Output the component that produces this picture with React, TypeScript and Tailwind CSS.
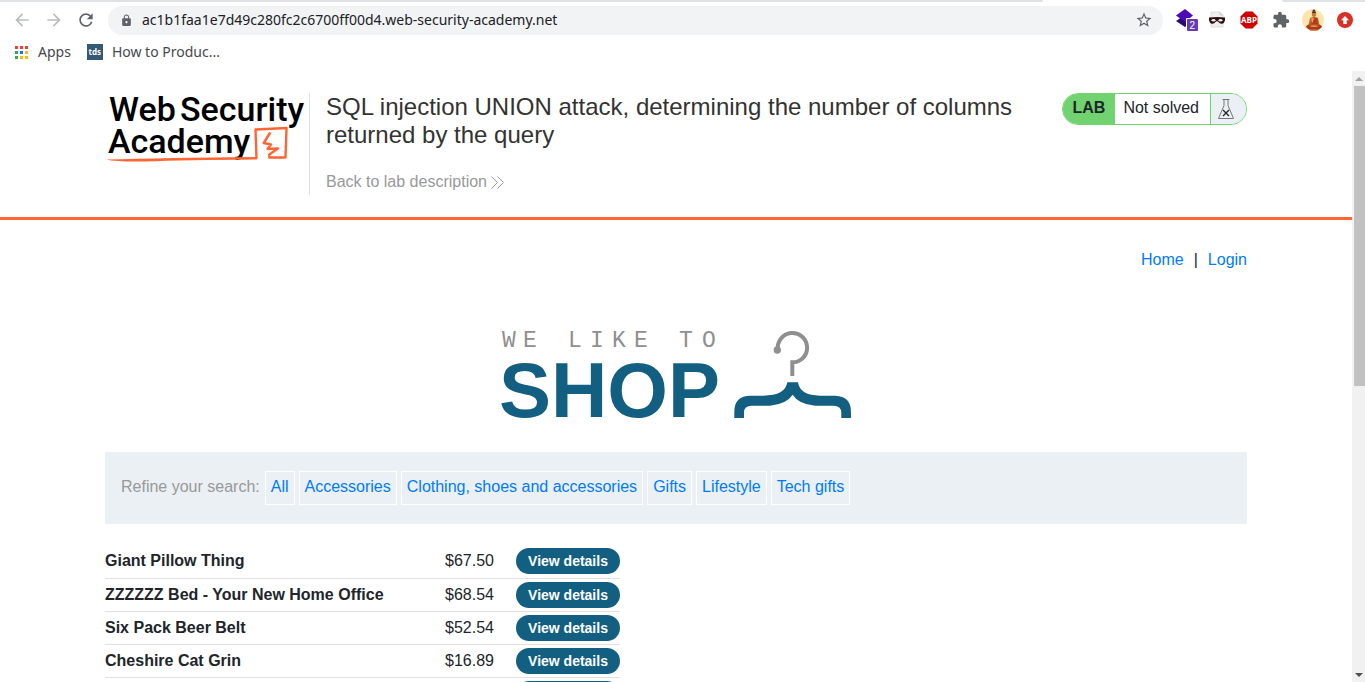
import React from "react";
import {
    MdArrowBack,
    MdArrowForward,
    MdExtension,
    MdLock,
    MdRefresh,
    MdStarBorder,
} from "react-icons/md";

const categories = [
    "All",
    "Accessories",
    "Clothing, shoes and accessories",
    "Gifts",
    "Lifestyle",
    "Tech gifts",
];

const products = [
    {name: "Giant Pillow Thing", price: "$67.50"},
    {name: "ZZZZZZ Bed - Your New Home Office", price: "$68.54"},
    {name: "Six Pack Beer Belt", price: "$52.54"},
    {name: "Cheshire Cat Grin", price: "$16.89"},
    {name: "", price: ""},
];

// 3x3 grid of the "Apps" bookmark
const appDots = [
    "bg-[#ea4335]", "bg-[#ea4335]", "bg-[#ea4335]",
    "bg-[#34a853]", "bg-[#1a73e8]", "bg-[#fbbc04]",
    "bg-[#34a853]", "bg-[#fbbc04]", "bg-[#fbbc04]",
];

const LayersIcon = () => (
    <svg width="22" height="22" viewBox="0 0 22 22">
        <path d="M0 12 9 6l8 6-8 6z" fill="#2a0a6e"/>
        <path d="M0 6.500 9 0l8 6.500-8 6.500z" fill="#4d0ab5"/>
        <rect x="10" y="9" width="12" height="13" rx="1" fill="#fff"/>
        <rect x="11" y="10" width="11" height="12" rx="1" fill="#673ab7"/>
        <text x="13.500" y="20" fontSize="10" fill="#fff" fontFamily="Liberation Sans, sans-serif">2</text>
    </svg>
);

const MaskIcon = () => (
    <svg width="18" height="18" viewBox="0 0 18 18">
        <path d="M3 1h9l3 3v12H3z" fill="#eee" stroke="#d5d5d5" strokeWidth=".8"/>
        <path d="M12 1v3h3" fill="none" stroke="#ccc"/>
        <path d="M1 6.500q8-1 16 0 .5 4-2 6-3 1-4.500-1.500L9 10l-1.500 1Q6 13.500 3 12.500q-2.500-2-2-6z" fill="#2b1013"/>
        <ellipse cx="5.500" cy="9.300" rx="2" ry="1.200" fill="#eee"/>
        <ellipse cx="12.500" cy="9.300" rx="2" ry="1.200" fill="#eee"/>
    </svg>
);

const AbpIcon = () => (
    <svg width="18" height="18" viewBox="0 0 18 18">
        <path d="M5.500.5h7l5 5v7l-5 5h-7l-5-5v-7z" fill="#d00000"/>
        <text x="9" y="12" fontSize="8" fontWeight="700" textAnchor="middle" fill="#fff" fontFamily="Open Sans, sans-serif">ABP</text>
    </svg>
);

const AvatarIcon = () => (
    <svg width="22" height="22" viewBox="0 0 22 22">
        <circle cx="11" cy="11" r="11" fill="#fde6ae"/>
        <path d="M9.500 2.500 12 .3l2 2.200z" fill="#3a2a2a"/>
        <ellipse cx="12" cy="5" rx="2.200" ry="3" fill="#c67a35"/>
        <path d="M9.800 4q2.200-3.500 4.400 0z" fill="#3b2a2a"/>
        <path d="M8 9q4-2 8 0l1.500 7h-11z" fill="#c06a28"/>
        <path d="M11.500 8.500 15.500 9l.5 6H9z" fill="#b8391c"/>
        <path d="M9 9.500 12 9l-1.500 5z" fill="#e6a85a"/>
        <path d="M4 18q.5-3 5-2.500h6q4.500-.5 5 2.500-3 3.500-8 3.500T4 18z" fill="#a8381a"/>
        <path d="M7 17q5-1.500 10 0-5 2-10 0z" fill="#eaa04a"/>
        <path d="M7 20.500h10l-1 1H8z" fill="#e0702a"/>
    </svg>
);

const UpdateIcon = () => (
    <svg width="16" height="16" viewBox="0 0 16 16">
        <circle cx="8" cy="8" r="8" fill="#d93025"/>
        <path d="M8 4 12 8.200H9.700V12H6.300V8.200H4z" fill="#fff"/>
    </svg>
);

const BrowserBar: React.FC = () => (
    <div className="shrink-0 bg-white font-['Noto_Sans',sans-serif]">
        {/* Bottom edge of the tab strip */}
        <div className="flex h-[2px] bg-white">
            <div className="w-[1043px] rounded-br-lg bg-[#dee1e6]"></div>
            <div className="w-[239px]"></div>
            <div className="flex-1 rounded-bl-lg bg-[#dee1e6]"></div>
        </div>

        <div className="flex h-9 items-center pr-1 pl-[6px]">
            <button aria-label="Back" className="flex w-8 justify-center text-[#babcbe]"><MdArrowBack size={20}/></button>
            <button aria-label="Forward" className="flex w-8 justify-center text-[#babcbe]"><MdArrowForward size={20}/></button>
            <button aria-label="Reload" className="flex w-8 justify-center text-[#5f6368]"><MdRefresh size={20}/></button>
            <div className="mx-[6px] flex h-[29px] min-w-0 flex-1 items-center rounded-full bg-[#f1f3f4] pr-[10px] pl-3">
                <MdLock size={13} className="shrink-0 text-[#5f6368]"/>
                <input
                    aria-label="Address"
                    className="ml-[9px] min-w-0 flex-1 bg-transparent text-sm text-[#202124] outline-none"
                    defaultValue="ac1b1faa1e7d49c280fc2c6700ff00d4.web-security-academy.net"
                />
                <button aria-label="Bookmark this page" className="text-[#5f6368]"><MdStarBorder size={18}/></button>
            </div>
            <button aria-label="Layers" className="flex w-8 justify-center pl-1"><LayersIcon/></button>
            <button aria-label="Mask" className="flex w-8 justify-center"><MaskIcon/></button>
            <button aria-label="Adblock" className="flex w-8 justify-center"><AbpIcon/></button>
            <button aria-label="Extensions" className="flex w-8 justify-center text-[#5f6368]"><MdExtension size={18}/></button>
            <button aria-label="Profile" className="flex w-8 justify-center"><AvatarIcon/></button>
            <button aria-label="Update" className="flex w-8 justify-center"><UpdateIcon/></button>
        </div>

        <div className="flex h-[33px] items-center pb-[5px] pl-[15px] text-sm text-[#45484c]">
            <a href="#apps" className="flex items-center">
                <span className="grid grid-cols-3 gap-[2px]">
                    {appDots.map((color, i) => <span key={i} className={`size-[3px] ${color}`}></span>)}
                </span>
                <span className="ml-[10px]">Apps</span>
            </a>
            <a href="#bookmark" className="ml-4 flex items-center">
                <span className="flex size-4 items-center justify-center bg-[#355876] text-[8px] font-bold text-white">tds</span>
                <span className="ml-[9px]">How to Produc...</span>
            </a>
        </div>
    </div>
);

const AcademyLogo = () => (
    <svg className="overflow-visible" width="200" height="72" viewBox="0 0 200 72" role="img" aria-label="Web Security Academy">
        <g fontFamily="Roboto, sans-serif" fontWeight="500" fontSize="34" fill="#000">
            <text x="4" y="28">Web</text>
            <text x="75" y="28">Security</text>
            <text x="3" y="60">Academy</text>
        </g>
        <path
            d="M151.500 65.500 150.500 36.500 181.500 35 180.500 64.500H164.300V61.500L173 55.500 162.500 56 166 51.500 158.700 50 165.300 39.500"
            fill="none"
            stroke="#ff6633"
            strokeWidth="2.400"
            strokeLinejoin="round"
        />
        <path d="M1 66.500Q60 65 152 64v2.500Q80 67 40 68.500 12 69 1 66.500z" fill="#ff6633"/>
    </svg>
);

const ShopLogo = () => (
    <svg className="overflow-visible" width="351" height="90" viewBox="0 0 351 90" role="img" aria-label="We like to shop">
        <text
            x="1 22 44 67 89 111 133 155 178 201"
            y="16"
            fontFamily="Liberation Mono, monospace"
            fontSize="23"
            fill="#8f8f8f"
        >WE LIKE TO</text>
        <text x="-2" y="86" fontFamily="Liberation Sans, Arial, sans-serif" fontWeight="700" fontSize="78" fill="#125f82">SHOP</text>
        <g transform="scale(.3333) translate(-33 -33)">
            <path d="M864 90A44 44 0 1 1 907 127V168" fill="none" stroke="#8f8f8f" strokeWidth="12"/>
            <circle cx="862" cy="90" r="11" fill="#8f8f8f"/>
            <path
                d="M733 294V275Q733 227 782 227H820Q886 227 892 187H924Q930 227 990 227H1036Q1083 229 1083 275V294H1054V278Q1054 257 1030 257H975Q925 252 908 224Q890 252 840 257H785Q762 257 762 278V294Z"
                fill="#125f82"
            />
        </g>
    </svg>
);

const FlaskIcon = () => (
    <svg width="18" height="22" viewBox="0 0 18 22" fill="none" stroke="#777">
        <path d="M5.500 1.500h7M7 1.500v6L1.500 20.500h15L11 7.500v-6"/>
        <path d="m6 12 6 6m0-6-6 6" stroke="#222" strokeWidth="1.300"/>
    </svg>
);

const LabHeader: React.FC = () => (
    <header className="border-b-[3px] border-[#ff6633] pt-[22px] pb-[22px]">
        <div className="mx-auto flex w-full max-w-[1142px] items-start">
            <a href="#academy" className="mr-1 shrink-0"><AcademyLogo/></a>
            <div className="flex-1 border-l border-[#dedede] pl-4">
                <h2 className="pr-10 text-2xl leading-7 text-[#333332]">
                    SQL injection UNION attack, determining the number of columns returned by the query
                </h2>
                <a href="#lab" className="mt-[21px] mb-[1px] flex items-center gap-1 leading-6 text-[#999]">
                    Back to lab description
                    <svg width="13" height="13" viewBox="0 0 13 13" fill="none" stroke="#999">
                        <path d="m.5.5 6 6-6 6M6.500.5l6 6-6 6"/>
                    </svg>
                </a>
            </div>
            <div className="flex h-8 shrink-0 items-stretch overflow-hidden rounded-full border border-[#71d370] leading-7">
                <span className="bg-[#71d370] px-[10px] font-bold text-[#212529]">LAB</span>
                <p className="pr-[11px] pl-2">Not solved</p>
                <span className="flex w-9 items-center border-l border-[#71d370] bg-[#eaf0f3] pl-[6px]"><FlaskIcon/></span>
            </div>
        </div>
    </header>
);

const App: React.FC = () => {
    return (
        <div className="flex h-screen flex-col overflow-hidden bg-white font-['Liberation_Sans',Arial,sans-serif] text-base text-[#212529]">
            <BrowserBar/>

            <div className="flex min-h-0 flex-1">
                <div className="min-w-0 flex-1 overflow-hidden">
                    <LabHeader/>

                    <main className="mx-auto w-full max-w-[1142px]">
                        <nav className="flex justify-end gap-[10px] pt-7 leading-6">
                            <a href="#home" className="text-[#007bff]">Home</a>
                            <span>|</span>
                            <a href="#login" className="text-[#007bff]">Login</a>
                        </nav>

                        <div className="mt-[59px] flex justify-center"><ShopLogo/></div>

                        <section className="mt-[31px] flex h-[72px] items-center gap-[5px] bg-[#eaf0f3] px-4">
                            <span className="h-[34px] leading-8 text-[#999]">Refine your search:</span>
                            <div className="flex gap-1">
                                {categories.map((category) => (
                                    <a
                                        key={category}
                                        href="#filter"
                                        className="h-[34px] border border-white px-[5px] leading-[30px] text-[#007bff]"
                                    >
                                        {category}
                                    </a>
                                ))}
                            </div>
                        </section>

                        <table className="mt-[21px] w-[515px]">
                            <tbody>
                            {products.map((product) => (
                                <tr key={product.name} className="h-[33px] border-b border-[#dee2e6]">
                                    <td className="w-[340px] font-bold">{product.name}</td>
                                    <td>{product.price}</td>
                                    <td className="w-[104px]">
                                        <a
                                            href="#product"
                                            className="block h-[26px] rounded-full bg-[#125f82] text-center text-sm leading-[26px] font-bold text-white"
                                        >
                                            View details
                                        </a>
                                    </td>
                                </tr>
                            ))}
                            </tbody>
                        </table>
                    </main>
                </div>

                {/* Scrollbar */}
                <div className="flex w-[13px] shrink-0 flex-col items-end bg-[#f1f1f1]">
                    <svg width="11" height="15" viewBox="0 0 11 15"><path d="M1 10h8L5 6z" fill="#a3a3a3"/></svg>
                    <div className="h-[300px] w-[11px] bg-[#c1c1c1]"></div>
                    <svg className="mt-auto" width="11" height="15" viewBox="0 0 11 15"><path d="M1 6h8l-4 4z" fill="#505050"/></svg>
                </div>
            </div>
        </div>
    );
};

export default App;
